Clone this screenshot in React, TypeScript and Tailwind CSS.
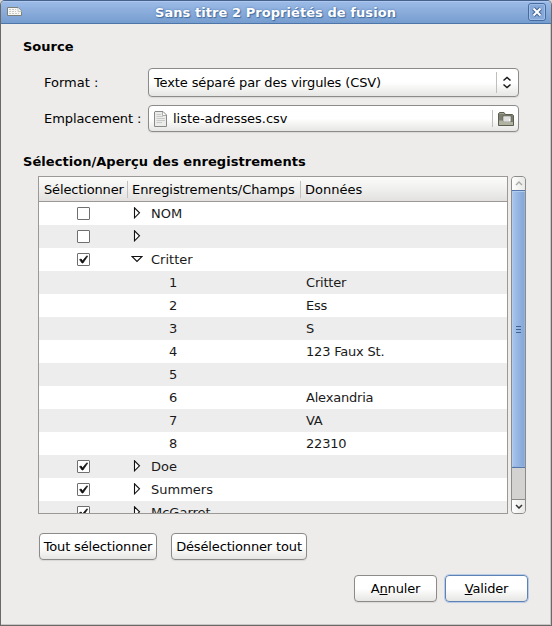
import React from "react";

type RowData = {
  name?: string;
  index?: string;
  value?: string;
  checked?: boolean;
  open?: boolean;
};

const rows: RowData[] = [
  { name: "NOM", checked: false },
  { name: "", checked: false },
  { name: "Critter", checked: true, open: true },
  { index: "1", value: "Critter" },
  { index: "2", value: "Ess" },
  { index: "3", value: "S" },
  { index: "4", value: "123 Faux St." },
  { index: "5", value: "" },
  { index: "6", value: "Alexandria" },
  { index: "7", value: "VA" },
  { index: "8", value: "22310" },
  { name: "Doe", checked: true },
  { name: "Summers", checked: true },
  { name: "McGarret", checked: true },
];

function CheckBox({ checked }: { checked: boolean }) {
  return (
    <svg width="13" height="13" viewBox="0 0 13 13" className="block shrink-0">
      <rect x="0.5" y="0.5" width="12" height="12" rx="0.5" fill="#fff" stroke="#6f6f6f" />
      {checked && <path d="M2.6 6.6 4.2 6 5.5 7.9 9.9 2.7 10.6 3.3 6 10 5 10Z" fill="#111" stroke="#111" strokeWidth="0.7" />}
    </svg>
  );
}

function Expander({ open }: { open?: boolean }) {
  return open ? (
    <svg width="12" height="12" viewBox="0 0 12 12" className="block shrink-0">
      <path d="M1 3.5H11L6 8.5Z" fill="#fff" stroke="#111" strokeWidth="1.1" />
    </svg>
  ) : (
    <svg width="12" height="12" viewBox="0 0 12 12" className="block shrink-0">
      <path d="M3.5 0.8V10.8L8.5 5.8Z" fill="#fff" stroke="#111" strokeWidth="1.1" />
    </svg>
  );
}

function Row({ row, shaded }: { row: RowData; shaded: boolean }) {
  return (
    <div className={`flex h-[23px] shrink-0 items-center text-[#1a1a1a] ${shaded ? "bg-[#ededed]" : "bg-white"}`}>
      <div className="flex w-[89px] shrink-0 pl-[38px]">
        {row.checked !== undefined && <CheckBox checked={row.checked} />}
      </div>
      <div className="flex w-[178px] shrink-0 items-center">
        {row.index === undefined ? (
          <>
            <div className="ml-[3px] mr-[8px] -mt-[2px]"><Expander open={row.open} /></div>
            <span>{row.name}</span>
          </>
        ) : (
          <span className="pl-[41px]">{row.index}</span>
        )}
      </div>
      <span className="tracking-[-0.2px]">{row.value}</span>
    </div>
  );
}

function Button({ children, className }: { children: React.ReactNode; className: string }) {
  return (
    <button className={`flex h-[27px] items-center justify-center rounded-[4px] border bg-linear-to-b from-white from-50% to-[#e6e6e4] tracking-[-0.15px] shadow-[0_1px_1px_#dad9d7] ${className}`}>
      {children}
    </button>
  );
}

export default function App() {
  return (
    <div className="h-[626px] w-[552px] bg-[#d8d7d5]">
      <div className="flex h-[626px] w-[552px] flex-col overflow-hidden rounded-t-[5px] border border-[#6b6968] border-t-[#45628c] bg-[#edecea] font-['DejaVu_Sans',sans-serif] text-[13px] leading-[16px] whitespace-nowrap text-black shadow-[inset_-1px_-1px_#c8c7c5]">
        <header className="flex h-[23px] shrink-0 items-center border-b border-[#4d75a8] bg-linear-to-b from-[#9dbbe7] to-[#769dcf] shadow-[inset_0_1px_#adc7ee]">
          <svg width="16" height="10" viewBox="0 0 16 10" className="ml-[6px] shrink-0">
            <path d="M0.5 0.5H11L14.5 4V8.5H0.5Z" fill="#f6f6f4" stroke="#7d8079" />
            <path d="M11 1V4.5H14.5" fill="#fff" stroke="#c5c7c2" />
            <path d="M2 2.5H9M2 4.5H9M2 6.5H12" stroke="#c8cac6" strokeDasharray="2 1" />
          </svg>
          <h1 className="flex-1 pt-[2px] text-center font-bold tracking-[0.06px] text-white [text-shadow:1px_1px_1px_#446c9e,0_0_2px_#4d76ad]">Sans titre 2 Propriétés de fusion</h1>
          <svg width="18" height="18" viewBox="0 0 18 18" className="mr-[5px] shrink-0">
            <rect x="0.5" y="0.5" width="17" height="17" rx="2.5" fill="#86a9da" stroke="#456b9f" />
            <rect x="1.5" y="1.5" width="15" height="15" rx="1.5" fill="none" stroke="#9fbce5" />
            <path d="M5.5 5.5 12.5 12.5M12.5 5.5 5.5 12.5" stroke="#426594" strokeWidth="4" />
            <path d="M5.5 5.5 12.5 12.5M12.5 5.5 5.5 12.5" stroke="#fff" strokeWidth="2" />
          </svg>
        </header>

        <main className="flex flex-col">
          <h2 className="mt-[15px] ml-[22px] font-bold">Source</h2>
          <div className="mt-[13px] flex h-[29px] items-center pl-[43px]">
            <span className="w-[104px]">Format :</span>
            <div className="flex h-[29px] w-[371px] items-center rounded-[4px] border border-[#8d8b89] bg-linear-to-b from-white from-50% to-[#e6e6e4] pl-[5px] shadow-[0_1px_1px_#dad9d7]">
              <span className="flex-1 tracking-[-0.12px]">Texte séparé par des virgules (CSV)</span>
              <div className="h-[21px] w-px bg-[#c0bfbd]" />
              <svg width="21" height="13" viewBox="0 0 21 13" className="shrink-0">
                <path d="M6.5 4.5 10 1.5 13.5 4.5M6.5 8.5 10 11.5 13.5 8.5" fill="none" stroke="#1a1a1a" strokeWidth="1.5" />
              </svg>
            </div>
          </div>
          <div className="mt-[8px] flex h-[27px] items-center pl-[43px]">
            <span className="w-[104px] tracking-[-0.08px]">Emplacement :</span>
            <div className="flex h-[27px] w-[371px] items-center rounded-[4px] border border-[#8d8b89] bg-linear-to-b from-white from-50% to-[#e6e6e4] pl-[5px] shadow-[0_1px_1px_#dad9d7]">
              <svg width="13" height="16" viewBox="0 0 13 16" className="mr-[6px] shrink-0">
                <path d="M1 .5H9L12.5 4V15.5H.5V1Z" fill="#ececea" stroke="#888a85" />
                <path d="M8.5 1V4.5H12" fill="#fff" stroke="#aaaca8" />
                <path d="M2.5 3.5H7M2.5 5.5H9M2.5 7.5H11M2.5 9.5H11M2.5 11.5H8" stroke="#c8cac6" />
              </svg>
              <span className="flex-1 tracking-[-0.04px]">liste-adresses.csv</span>
              <div className="h-[17px] w-px bg-[#c0bfbd]" />
              <svg width="16" height="14" viewBox="0 0 16 14" className="mr-[4px] ml-[5px] shrink-0">
                <path d="M.5 13.5V1.5L1.5.5H6L7.5 2.5H14.5L15.5 3.5V13.5Z" fill="#7d7f70" stroke="#5c5e50" />
                <path d="M1.5 1.5H6" stroke="#a2a496" />
                <rect x="5" y="4" width="8" height="6" fill="#fff" stroke="#65675a" strokeWidth="0.8" />
                <path d="M6 6H12M6 8H11" stroke="#b0b1ad" strokeWidth="0.8" />
                <path d="M1 8.5H4.5L6 10H15V13H1Z" fill="#b0b2a2" />
              </svg>
            </div>
          </div>
          <h2 className="mt-[22px] ml-[22px] font-bold tracking-[0.05px]">Sélection/Aperçu des enregistrements</h2>

          <div className="mt-[6px] ml-[37px] flex h-[338px] gap-[3px]">
            <section className="flex h-[338px] w-[470px] flex-col overflow-hidden border border-[#9b9895] bg-white">
              <div className="flex h-[25px] shrink-0 items-center border-b border-[#9b9895] bg-linear-to-b from-[#fbfbfa] via-[#f0f0ef] to-[#e2e1df]">
                <span className="w-[88px] shrink-0 pt-[2px] pl-[5px] tracking-[-0.15px]">Sélectionner</span>
                <div className="h-[17px] w-px bg-[#c3c1bf]" />
                <span className="w-[172px] shrink-0 pt-[2px] pl-[4px] tracking-[-0.08px]">Enregistrements/Champs</span>
                <div className="h-[17px] w-px bg-[#c3c1bf]" />
                <span className="pt-[2px] pl-[4px]">Données</span>
              </div>
              {rows.map((row, i) => <Row key={i} row={row} shaded={i % 2 === 1} />)}
            </section>

            <div className="flex h-[338px] w-[15px] flex-col overflow-hidden rounded-[4px] border border-[#8d8b89] bg-[#d3d2d0]">
              <div className="flex h-[13px] shrink-0 items-center justify-center bg-linear-to-r from-white to-[#e8e8e6]">
                <svg width="8" height="5" viewBox="0 0 8 5"><path d="M1 4 4 1 7 4" fill="none" stroke="#aaa9a6" strokeWidth="1.4" /></svg>
              </div>
              <div className="-mx-px flex h-[278px] shrink-0 flex-col items-center justify-center gap-[2px] border border-[#5578ab] bg-linear-to-r from-[#a9c5eb] to-[#80a5d7] shadow-[inset_1px_1px_#b2ccef,inset_-1px_-1px_#93b3df]">
                <div className="h-px w-[5px] bg-[#3f6394]" />
                <div className="h-px w-[5px] bg-[#3f6394]" />
                <div className="h-px w-[5px] bg-[#3f6394]" />
              </div>
              <div className="mt-auto flex h-[14px] shrink-0 items-center justify-center border-t border-[#8d8b89] bg-linear-to-r from-white to-[#e8e8e6]">
                <svg width="8" height="5" viewBox="0 0 8 5"><path d="M1 1 4 4 7 1" fill="none" stroke="#333" strokeWidth="1.5" /></svg>
              </div>
            </div>
          </div>

          <div className="mt-[19px] ml-[38px] flex gap-[14px]">
            <Button className="w-[118px] border-[#8d8b89]">Tout sélectionner</Button>
            <Button className="w-[136px] border-[#8d8b89]">Désélectionner tout</Button>
          </div>
          <div className="mt-[15px] mr-[23px] flex justify-end gap-[8px]">
            <Button className="w-[83px] border-[#8d8b89]"><span>A<u>n</u>nuler</span></Button>
            <Button className="w-[83px] border-[#5f82b4] outline outline-[#b8cce8]"><span><u>V</u>alider</span></Button>
          </div>
        </main>
      </div>
    </div>
  );
}
